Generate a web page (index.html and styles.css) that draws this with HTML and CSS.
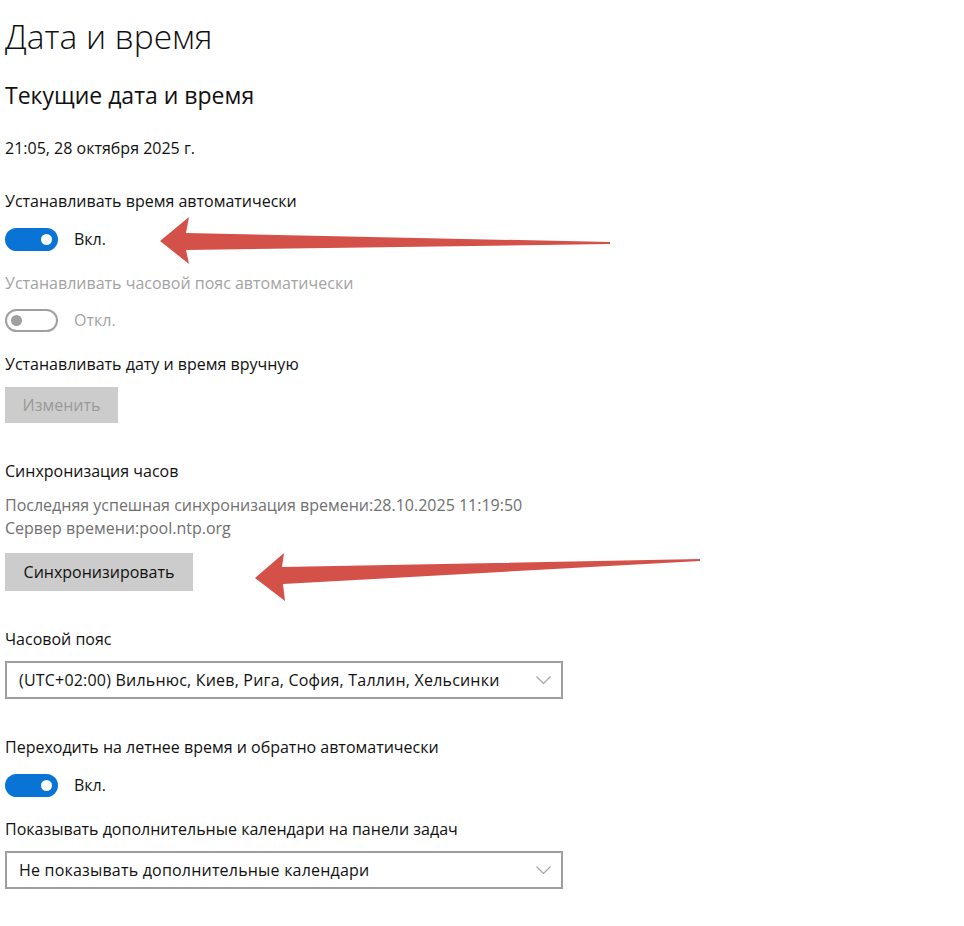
FILE: index.html
```html
<!DOCTYPE html>
<html lang="ru">
<head>
    <meta charset="UTF-8">
    <meta name="viewport" content="width=device-width, initial-scale=1.0">
    <title>Дата и время</title>
    <link rel="stylesheet" href="styles.css">
</head>
<body>
    <main class="page">
        <h1 class="title">Дата и время</h1>
        <h2 class="subtitle">Текущие дата и время</h2>
        <p class="current">21:05, 28 октября 2025 г.</p>

        <div class="label gap-lg">Устанавливать время автоматически</div>
        <div class="toggle-row">
            <span class="toggle on"></span>
            <span>Вкл.</span>
        </div>

        <div class="label muted gap-md">Устанавливать часовой пояс автоматически</div>
        <div class="toggle-row off-row">
            <span class="toggle off"></span>
            <span>Откл.</span>
        </div>

        <div class="label gap-md">Устанавливать дату и время вручную</div>
        <button class="btn disabled" disabled>Изменить</button>

        <div class="label section">Синхронизация часов</div>
        <div class="info first">Последняя успешная синхронизация времени:28.10.2025 11:19:50</div>
        <div class="info">Сервер времени:pool.ntp.org</div>
        <button class="btn sync">Синхронизировать</button>

        <div class="label section">Часовой пояс</div>
        <div class="select">
            <span>(UTC+02:00) Вильнюс, Киев, Рига, София, Таллин, Хельсинки</span>
            <svg class="chevron" width="15" height="8" viewBox="0 0 15 8"><path d="M0.5 0.5l7 7 7-7" fill="none" stroke="#a6a6a6" stroke-width="1.2"/></svg>
        </div>

        <div class="label section">Переходить на летнее время и обратно автоматически</div>
        <div class="toggle-row">
            <span class="toggle on"></span>
            <span>Вкл.</span>
        </div>

        <div class="label gap-md">Показывать дополнительные календари на панели задач</div>
        <div class="select">
            <span>Не показывать дополнительные календари</span>
            <svg class="chevron" width="15" height="8" viewBox="0 0 15 8"><path d="M0.5 0.5l7 7 7-7" fill="none" stroke="#a6a6a6" stroke-width="1.2"/></svg>
        </div>
    </main>

    <!-- стрелки-пометки поверх скриншота -->
    <svg class="marks" width="964" height="926" viewBox="0 0 964 926">
        <polygon points="160,241 189,217 186,233 610,242 610,244 186,250 189,264" fill="#d4514a"/>
        <polygon points="255,578 284,553 282,567 700,559 700,561 283,584 285,601" fill="#d4514a"/>
    </svg>
</body>
</html>
```

FILE: styles.css
```css
body {
    margin: 0;
    background: #fff;
    font-family: "Open Sans", "Noto Sans", sans-serif;
    color: #111;
}
.page {
    position: relative;
    padding: 14px 0 0 5px;
}
.title {
    margin: 0;
    font-size: 33.5px;
    font-weight: 300;
    line-height: 44px;
    color: #111;
}
.subtitle {
    margin: 22px 0 0;
    font-size: 23px;
    font-weight: 400;
    line-height: 30px;
}
.current {
    margin: 27px 0 0;
    font-size: 16px;
    line-height: 22px;
}
.label {
    font-size: 16px;
    line-height: 22px;
}
.gap-lg {
    margin-top: 31px;
}
.gap-md {
    margin-top: 21px;
}
.section {
    margin-top: 37px;
}
.muted {
    color: #a3a3a3;
}
.toggle-row {
    display: flex;
    align-items: center;
    gap: 16px;
    height: 24px;
    margin-top: 15px;
    font-size: 16px;
}
.off-row {
    margin-top: 14px;
    color: #a3a3a3;
}
.toggle {
    position: relative;
    width: 53px;
    height: 23px;
    border-radius: 12px;
    box-sizing: border-box;
}
.toggle.on {
    background: #0a74d6;
}
.toggle.off {
    border: 2px solid #a0a0a0;
}
.toggle::after {
    content: "";
    position: absolute;
    top: 50%;
    width: 11px;
    height: 11px;
    margin-top: -5.5px;
    border-radius: 50%;
}
.toggle.on::after {
    right: 6px;
    background: #fff;
}
.toggle.off::after {
    left: 4px;
    background: #a0a0a0;
}
.btn {
    display: block;
    margin-top: 12px;
    padding: 0;
    height: 36px;
    border: none;
    background: #cccccc;
    font-family: inherit;
    font-size: 16px;
    color: #111;
}
.btn.disabled {
    width: 113px;
    color: #9a9a9a;
}
.btn.sync {
    width: 188px;
    height: 38px;
    margin-top: 13px;
}
.info {
    font-size: 16px;
    line-height: 23px;
    color: #707070;
}
.info.first {
    margin-top: 12px;
}
.select {
    display: flex;
    align-items: center;
    justify-content: space-between;
    width: 558px;
    height: 38px;
    margin-top: 11px;
    padding: 0 10px 0 12px;
    box-sizing: border-box;
    border: 2px solid #9e9e9e;
    font-size: 16px;
    letter-spacing: 0.2px;
}
.marks {
    position: absolute;
    left: 0;
    top: 0;
}
```
